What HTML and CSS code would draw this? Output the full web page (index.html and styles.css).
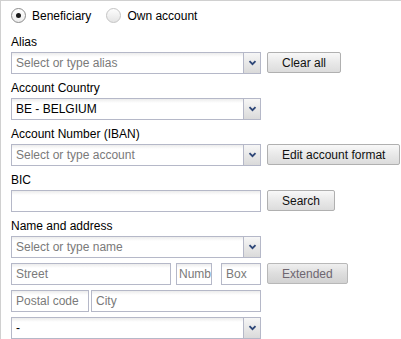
FILE: index.html
```html
<!DOCTYPE html>
<html lang="en">
<head>
  <meta charset="UTF-8" />
  <title>Beneficiary</title>
  <link rel="stylesheet" href="styles.css">
</head>
<body>
  <div class="panel">
    <div class="radios">
      <label class="opt"><span class="radio checked"></span>Beneficiary</label>
      <label class="opt"><span class="radio"></span>Own account</label>
    </div>

    <div class="label">Alias</div>
    <div class="row">
      <div class="combo"><span class="value ph">Select or type alias</span><span class="trigger"><svg width="9" height="6" viewBox="0 0 9 6"><path d="M1.5 1.2 L4.5 4.2 L7.5 1.2" fill="none" stroke="#2d4677" stroke-width="1.8"/></svg></span></div>
      <button class="btn">Clear all</button>
    </div>

    <div class="label">Account Country</div>
    <div class="row">
      <div class="combo"><span class="value">BE - BELGIUM</span><span class="trigger"><svg width="9" height="6" viewBox="0 0 9 6"><path d="M1.5 1.2 L4.5 4.2 L7.5 1.2" fill="none" stroke="#2d4677" stroke-width="1.8"/></svg></span></div>
    </div>

    <div class="label">Account Number (IBAN)</div>
    <div class="row">
      <div class="combo"><span class="value ph">Select or type account</span><span class="trigger"><svg width="9" height="6" viewBox="0 0 9 6"><path d="M1.5 1.2 L4.5 4.2 L7.5 1.2" fill="none" stroke="#2d4677" stroke-width="1.8"/></svg></span></div>
      <button class="btn">Edit account format</button>
    </div>

    <div class="label">BIC</div>
    <div class="row">
      <div class="field wide"></div>
      <button class="btn">Search</button>
    </div>

    <div class="label">Name and address</div>
    <div class="row">
      <div class="combo"><span class="value ph">Select or type name</span><span class="trigger"><svg width="9" height="6" viewBox="0 0 9 6"><path d="M1.5 1.2 L4.5 4.2 L7.5 1.2" fill="none" stroke="#2d4677" stroke-width="1.8"/></svg></span></div>
    </div>
    <div class="row addr">
      <div class="field street ph">Street</div>
      <div class="field numb ph">Numb</div>
      <div class="field box ph">Box</div>
      <button class="btn disabled">Extended</button>
    </div>
    <div class="row addr">
      <div class="field postal ph">Postal code</div>
      <div class="field city ph">City</div>
    </div>
    <div class="row addr">
      <div class="combo"><span class="value">-</span><span class="trigger"><svg width="9" height="6" viewBox="0 0 9 6"><path d="M1.5 1.2 L4.5 4.2 L7.5 1.2" fill="none" stroke="#2d4677" stroke-width="1.8"/></svg></span></div>
    </div>
  </div>
</body>
</html>
```

FILE: styles.css
```css
* {
  box-sizing: border-box;
  margin: 0;
  padding: 0;
}

body {
  font-family: "Liberation Sans", Arial, sans-serif;
  font-size: 12px;
  color: #000;
  background: #fff;
}

.panel {
  border-top: 1px solid #d0d0d0;
  border-left: 1px solid #d0d0d0;
  padding-left: 10px;
  height: 339px;
}

/* radios */
.radios {
  height: 27px;
  padding-top: 7px;
  display: flex;
}

.opt {
  display: flex;
  align-items: center;
  height: 15px;
  margin-right: 15px;
}

.radio {
  width: 15px;
  height: 15px;
  border-radius: 50%;
  border: 1px solid #c4c4c4;
  background: linear-gradient(#fdfdfd, #e4e4e4);
  margin-right: 6px;
  display: flex;
  align-items: center;
  justify-content: center;
}

.radio.checked {
  border-color: #8c8c8c;
  background: linear-gradient(#ffffff, #ececec);
}

.radio.checked::after {
  content: "";
  width: 5px;
  height: 5px;
  border-radius: 50%;
  background: #1a1a1a;
}

.label {
  height: 24px;
  padding-top: 4px;
  line-height: 20px;
}

.row {
  display: flex;
  height: 22px;
}

.row.addr {
  margin-top: 5px;
}

/* fields */
.combo, .field {
  height: 22px;
  border: 1px solid #b5b8c8;
  background: linear-gradient(#ececec, #ffffff 4px);
  line-height: 20px;
  padding-left: 4px;
  white-space: nowrap;
  overflow: hidden;
}

.combo {
  width: 250px;
  display: flex;
  padding-left: 0;
}

.combo .value {
  flex: 1;
  padding-left: 4px;
}

.ph {
  color: #7a7a7a;
}

.trigger {
  width: 17px;
  border-left: 1px solid #b5b8c8;
  background: linear-gradient(#f6f6f6, #dadada);
  display: flex;
  align-items: center;
  justify-content: center;
}

.wide { width: 250px; }
.street { width: 160px; }
.numb { width: 36px; margin-left: 5px; padding-left: 2px; }
.box { width: 40px; margin-left: 9px; }
.postal { width: 78px; }
.city { width: 170px; margin-left: 2px; }

/* buttons */
.btn {
  font-family: "Liberation Sans", Arial, sans-serif;
  font-size: 12px;
  color: #111;
  height: 21px;
  margin-left: 6px;
  padding: 0 14px;
  border: 1px solid #b0b0b0;
  border-radius: 2px;
  background: linear-gradient(#f8f8f8, #e9e9e9 50%, #dcdcdc);
  cursor: pointer;
}

.btn.disabled {
  color: #6e6670;
  background: linear-gradient(#efefef, #dedede 50%, #d2d2d2);
  border-color: #b8b8b8;
}
```
